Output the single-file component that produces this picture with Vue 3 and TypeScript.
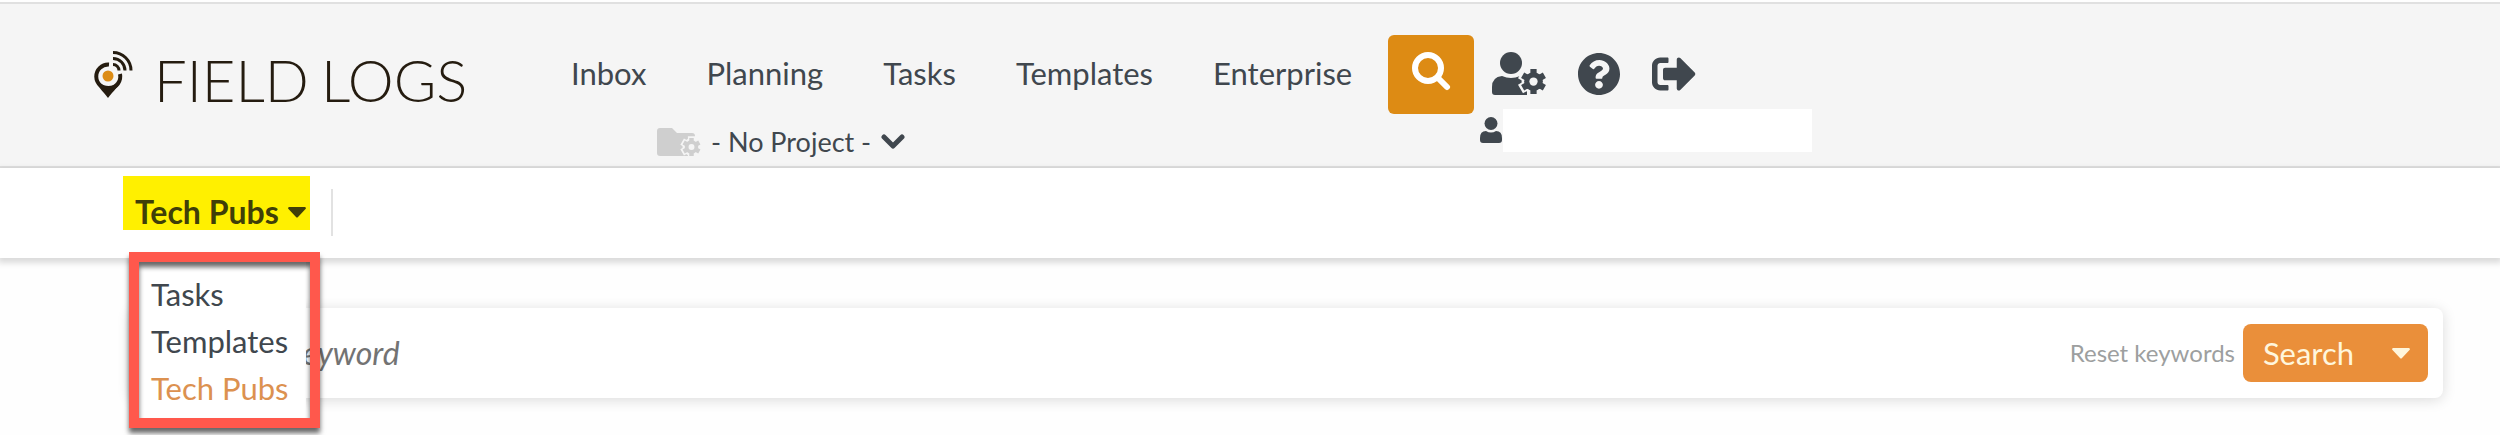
<script setup lang="ts">
import { ref } from 'vue'

const navItems = ['Inbox', 'Planning', 'Tasks', 'Templates', 'Enterprise']
const sections = ['Tasks', 'Templates', 'Tech Pubs']
const current = ref('Tech Pubs')
const keyword = ref('')

const gearTeeth = 'M0-10V10M-8.7-5L8.7 5M-8.7 5L8.7-5'
const gearGap = 'M0-12V12M-10.4-6L10.4 6M-10.4 6L10.4-6'
</script>

<template>
  <div class="page">
    <header class="top">
      <a class="brand" href="#" aria-label="Field Logs">
        <svg class="pin" viewBox="0 0 40 48" aria-hidden="true">
          <path d="M15 14.5A12 12 0 1 0 26 24" fill="none" stroke="#251c10" stroke-width="4" />
          <path d="M1 27C2 36 9 41 14 48C19 41 26 36 28 27C24 39 5 39 1 27z" fill="#251c10" />
          <circle cx="14" cy="26" r="5.5" fill="#dc8c16" />
          <g fill="none" stroke="#251c10" stroke-width="3">
            <path d="M19 14.5A6 6 0 0 1 25 20.5" />
            <path d="M19 8.5A12 12 0 0 1 31 20.5" />
            <path d="M19 2.5A18 18 0 0 1 37 20.5" />
          </g>
        </svg>
        <span class="wordmark"><span>FIELD</span><span>LOGS</span></span>
      </a>

      <div class="middle">
        <nav class="nav">
          <a v-for="item in navItems" :key="item" href="#">{{ item }}</a>
        </nav>
        <button class="project" type="button">
          <svg class="folder" viewBox="0 0 44 30" aria-hidden="true">
            <path d="M3 1H15L20 6H35Q38 6 38 9V29H3Q0 29 0 26V4Q0 1 3 1z" fill="#cfcfcf" />
            <g transform="translate(34.5 20) scale(.9)">
              <path :d="gearGap" stroke="#f5f5f5" stroke-width="8" />
              <circle r="10" fill="#f5f5f5" />
              <path :d="gearTeeth" stroke="#cfcfcf" stroke-width="5" />
              <circle r="7.5" fill="#cfcfcf" />
              <circle r="3.3" fill="#f5f5f5" />
            </g>
          </svg>
          <span>- No Project -</span>
          <svg class="chevron" viewBox="0 0 24 16" aria-hidden="true">
            <path d="M3 3L12 12L21 3" fill="none" stroke="#40474e" stroke-width="5" stroke-linecap="round" stroke-linejoin="round" />
          </svg>
        </button>
      </div>

      <div class="actions">
        <button class="find" type="button" aria-label="Search">
          <svg viewBox="0 0 40 40" aria-hidden="true">
            <circle cx="17" cy="17" r="13" fill="none" stroke="#fff" stroke-width="6" />
            <path d="M27 27L36 36" stroke="#fff" stroke-width="6" stroke-linecap="round" />
          </svg>
        </button>
        <div class="account">
          <div class="icons">
            <button type="button" aria-label="User settings">
              <svg class="w54" viewBox="0 0 54 44" aria-hidden="true">
                <circle cx="19" cy="11" r="11" />
                <path d="M10 24Q19 28 28 24Q32 24 35 27V43H3Q0 43 0 40V35Q0 25 10 24z" />
                <g transform="translate(41.5 29.5) scale(1.25)">
                  <path :d="gearGap" stroke="#f5f5f5" stroke-width="8" />
                  <circle r="9.5" fill="#f5f5f5" />
                  <path :d="gearTeeth" stroke="#40474e" stroke-width="5" />
                  <circle r="7.5" />
                  <circle r="3.3" fill="#f5f5f5" />
                </g>
              </svg>
            </button>
            <button type="button" aria-label="Help">
              <svg class="w42" viewBox="8 8 496 496" aria-hidden="true">
                <path d="M504 256c0 137-111 248-248 248S8 393 8 256C8 119.1 119 8 256 8s248 111.1 248 248zM262.7 90c-54.5 0-89.3 23-116.5 63.8-3.5 5.3-2.4 12.4 2.7 16.3l34.7 26.3c5.2 3.9 12.6 3 16.7-2.1 17.9-22.7 30.1-35.8 57.3-35.8 20.4 0 45.7 13.1 45.7 33 0 15-12.4 22.7-32.5 34C247.1 238.5 216 255 216 296v4c0 6.6 5.4 12 12 12h56c6.6 0 12-5.4 12-12v-1.3c0-28.5 83.2-29.6 83.2-106.7 0-58-60.2-102-116.5-102zM256 338c-25.4 0-46 20.6-46 46s20.6 46 46 46 46-20.6 46-46-20.6-46-46-46z" />
              </svg>
            </button>
            <button type="button" aria-label="Sign out">
              <svg class="w44" viewBox="0 0 512 512" aria-hidden="true">
                <path d="M497 273L329 441c-15 15-41 4.5-41-17v-96H152c-13.3 0-24-10.7-24-24v-96c0-13.3 10.7-24 24-24h136V88c0-21.4 25.9-32 41-17l168 168c9.3 9.4 9.3 24.6 0 34zM192 436v-40c0-6.6-5.4-12-12-12H96c-17.7 0-32-14.3-32-32V160c0-17.7 14.3-32 32-32h84c6.6 0 12-5.4 12-12V76c0-6.6-5.4-12-12-12H96c-53 0-96 43-96 96v192c0 53 43 96 96 96h84c6.6 0 12-5.4 12-12z" />
              </svg>
            </button>
          </div>
          <div class="user">
            <svg viewBox="0 0 22 26" aria-hidden="true">
              <circle cx="11" cy="6.5" r="6.5" />
              <path d="M6 14Q11 17 16 14Q22 14 22 21V23Q22 26 19 26H3Q0 26 0 23V21Q0 14 6 14z" />
            </svg>
            <span class="user-name"></span>
          </div>
        </div>
      </div>
    </header>

    <div class="subbar">
      <div class="switcher">
        <button class="switch" type="button" aria-haspopup="true" aria-expanded="true">
          {{ current }}
          <svg class="caret" viewBox="0 0 18 11" aria-hidden="true"><path d="M1 0H17Q18.500 1 17.500 2L10 10Q9 11 8 10L.5 2Q-.5 1 1 0z" /></svg>
        </button>
        <ul class="menu">
          <li v-for="s in sections" :key="s">
            <a href="#" :class="{ active: s === current }" @click.prevent="current = s">{{ s }}</a>
          </li>
        </ul>
      </div>
      <span class="divider"></span>
    </div>

    <form class="search" @submit.prevent>
      <input v-model="keyword" type="text" placeholder="Keyword" aria-label="Keyword" />
      <button class="reset" type="button" @click="keyword = ''">Reset keywords</button>
      <div class="split">
        <button type="submit">Search</button>
        <button class="more" type="button" aria-label="Search options">
          <svg class="caret" viewBox="0 0 18 11" aria-hidden="true"><path d="M1 0H17Q18.500 1 17.500 2L10 10Q9 11 8 10L.5 2Q-.5 1 1 0z" /></svg>
        </button>
      </div>
    </form>
  </div>
</template>

<style>
body {
  margin: 0;
  background: #fefefe;
}
</style>

<style scoped>
.page {
  display: flow-root;
  min-height: 100vh;
  font-family: Lato, "Liberation Sans", sans-serif;
  font-size: 31px;
  line-height: 36px;
  color: #40474e;
}
* {
  box-sizing: border-box;
}
a {
  color: inherit;
  text-decoration: none;
}
button {
  padding: 0;
  border: 0;
  background: none;
  font: inherit;
  color: inherit;
  cursor: pointer;
}
svg {
  display: block;
  fill: currentColor;
}
.top {
  display: flex;
  align-items: flex-start;
  margin-top: 2px;
  height: 166px;
  padding-left: 94px;
  border-top: 2px solid #e0e0e0;
  border-bottom: 2px solid #e0e0e0;
  background: #f5f5f5;
}
.brand {
  display: flex;
  width: 477px;
  padding-top: 46px;
  gap: 20px;
}
.pin {
  width: 40px;
  height: 48px;
}
.wordmark {
  display: flex;
  gap: 12px;
  font-size: 58px;
  font-weight: 300;
  line-height: 60px;
  color: #251c10;
}
.middle {
  width: 817px;
}
.nav {
  display: flex;
  gap: 60px;
  padding-top: 51px;
}
.project {
  display: flex;
  align-items: center;
  gap: 10px;
  margin: 33px 0 0 86px;
  font-size: 27px;
}
.folder {
  width: 44px;
  height: 30px;
}
.chevron {
  width: 24px;
  height: 16px;
}
.actions {
  display: flex;
  gap: 6px;
  padding-top: 31px;
}
.find {
  display: flex;
  justify-content: center;
  width: 86px;
  height: 79px;
  padding-top: 16px;
  border-radius: 6px;
  background: #dd8b14;
}
.find svg {
  width: 40px;
  height: 40px;
}
.icons {
  display: flex;
  align-items: center;
  height: 74px;
  gap: 32px;
  padding: 3px 0 0 12px;
}
.w54 {
  width: 54px;
  height: 44px;
}
.w42 {
  width: 42px;
  height: 42px;
}
.w44 {
  width: 44px;
  height: 44px;
}
.user {
  display: flex;
  gap: 1px;
}
.user svg {
  width: 22px;
  height: 26px;
  margin-top: 8px;
}
.user-name {
  width: 309px;
  height: 43px;
  background: #fff;
}
.subbar {
  display: flex;
  height: 90px;
  padding-left: 123px;
  background: #fff;
  box-shadow: 0 3px 6px 2px rgba(0, 0, 0, 0.14);
}
.switcher {
  position: relative;
  padding-top: 8px;
}
.switch {
  display: flex;
  align-items: center;
  gap: 9px;
  height: 54px;
  padding: 18px 4px 0 12px;
  background: #fff000;
  font-size: 32px;
  font-weight: 700;
  color: #403f08;
}
.caret {
  width: 18px;
  height: 11px;
}
.menu {
  position: absolute;
  z-index: 1;
  top: 84px;
  left: 6px;
  width: 191px;
  margin: 0;
  padding: 9px 0 6px 12px;
  border: 10px solid #ff584c;
  background: linear-gradient(#fff, #fff) 0 0 / calc(100% - 4px) 100% no-repeat;
  box-shadow: 0 5px 5px rgba(0, 0, 0, 0.6), inset 0 5px 5px rgba(0, 0, 0, 0.6);
  line-height: 47px;
  list-style: none;
  white-space: nowrap;
}
.menu .active {
  color: #dc9150;
}
.divider {
  width: 2px;
  height: 47px;
  margin: 21px 0 0 21px;
  background: #e2e2e2;
}
.search {
  display: flex;
  align-items: center;
  height: 90px;
  margin: 50px 57px 0 130px;
  padding-right: 15px;
  border-radius: 8px;
  background: #fff;
  box-shadow: 0 2px 14px rgba(0, 0, 0, 0.14);
}
.search input {
  flex: 1;
  min-width: 0;
  padding: 0 0 0 154px;
  border: 0;
  outline: 0;
  background: none;
  font: inherit;
  font-size: 32px;
  color: inherit;
}
.search input::placeholder {
  font-style: italic;
  color: #737373;
  opacity: 1;
}
.reset {
  margin-right: 8px;
  font-size: 24px;
  color: #9d9f9f;
}
.split {
  display: flex;
  width: 185px;
  height: 58px;
  border-radius: 8px;
  background: #ea8f3a;
  color: #fff6dc;
}
.split button:first-child {
  flex: 1;
}
.more {
  display: flex;
  align-items: center;
  padding: 0 18px;
}
</style>
